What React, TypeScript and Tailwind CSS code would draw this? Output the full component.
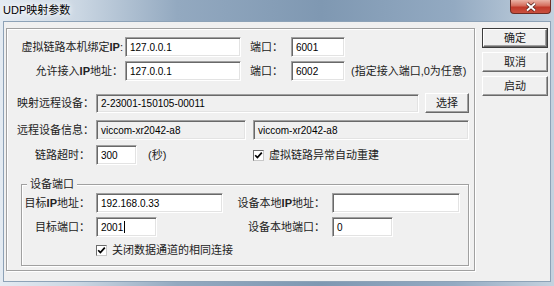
import React from 'react';

const font = "font-['Liberation_Sans','Noto_Sans_CJK_SC',sans-serif]";
const sunken =
  'border border-t-[#a0a0a0] border-l-[#a0a0a0] border-r-white border-b-white shadow-[inset_1px_1px_0_#696969,inset_-1px_-1px_0_#e3e3e3]';
const etched = 'border border-[#a0a0a0] shadow-[inset_1px_1px_0_#fff,1px_1px_0_#fff]';

type FieldProps = { className?: string; value?: string; readOnly?: boolean; caret?: boolean };

const Field: React.FC<FieldProps> = ({ className = '', value = '', readOnly, caret }) => (
  <div
    className={`${sunken} flex h-[20px] shrink-0 items-center pl-[4px] text-[10px] text-black ${
      readOnly ? 'bg-[#f0f0f0]' : 'bg-white'
    } ${className}`}
  >
    {value}
    {caret && <span className="ml-px h-[12px] w-px bg-black" />}
  </div>
);

const Label: React.FC<{ className?: string; children: React.ReactNode }> = ({ className = '', children }) => (
  <div className={`shrink-0 whitespace-nowrap text-[11px] leading-[14px] text-[#222] ${className}`}>{children}</div>
);

const Btn: React.FC<{ className?: string; def?: boolean; children: React.ReactNode }> = ({
  className = '',
  def,
  children,
}) => (
  <div className={`h-[20px] ${def ? 'border border-[#3c3c3c]' : ''} ${className}`}>
    <div className="flex h-full items-center justify-center border border-t-white border-l-white border-r-[#696969] border-b-[#696969] bg-[#f0f0f0] text-[11px] text-[#222] shadow-[inset_-1px_-1px_0_#a0a0a0]">
      {children}
    </div>
  </div>
);

const Check: React.FC<{ children: React.ReactNode }> = ({ children }) => (
  <div className="flex items-center gap-[5px]">
    <span className="flex h-[11px] w-[11px] items-center justify-center border border-t-[#6b6b6b] border-l-[#6b6b6b] border-r-[#c8c8c8] border-b-[#c8c8c8] bg-white">
      <svg width="9" height="9" viewBox="0 0 9 9">
        <path d="M1.2 4.2 L3.4 6.6 L7.8 1.6" fill="none" stroke="#000" strokeWidth="1.7" />
      </svg>
    </span>
    <Label>{children}</Label>
  </div>
);

const App: React.FC = () => {
  return (
    <div
      className={`${font} flex h-[286px] w-[554px] flex-col bg-[linear-gradient(90deg,#e4ebf2_0%,#cbd7e3_14%,#93a9c0_32%,#7f98b2_58%,#93aac2_82%,#c4d2df_100%)]`}
    >
      {/* title bar */}
      <div className="flex h-[21px] items-start justify-between">
        <div className="pl-[3px] pt-[3px] text-[11px] leading-[14px] text-black [text-shadow:0_0_5px_#fff,0_0_8px_#fff]">
          UDP映射参数
        </div>
        <div className="mr-[3px] flex h-[14px] w-[41px] items-center justify-center rounded-b-[4px] border border-t-0 border-[#6e2c24] bg-[linear-gradient(180deg,#eab3a6_0%,#d46d5c_45%,#c0392a_55%,#c9503e_100%)]">
          <svg width="12" height="10" viewBox="0 0 12 10">
            <path d="M2 1.5 L10 8.5 M10 1.5 L2 8.5" stroke="#4a1a14" strokeWidth="3.4" />
            <path d="M2 1.5 L10 8.5 M10 1.5 L2 8.5" stroke="#fff" strokeWidth="2" />
          </svg>
        </div>
      </div>

      {/* client area */}
      <div className="mx-[3px] flex h-[261px] border border-[#8da2b7] bg-[#f0f0f0]">
        <div className={`${etched} ml-[2px] mt-[6px] flex h-[243px] w-[469px] flex-col pt-[8px]`}>
          <div className="flex h-[20px] items-center">
            <Label className="w-[116px] text-right">
              虚拟链路本机绑定<b>IP</b>:
            </Label>
            <Field className="ml-[2px] w-[116px]" value="127.0.0.1" />
            <Label className="w-[50px] pl-[9px]">端口：</Label>
            <Field className="w-[54px]" value="6001" />
          </div>
          <div className="mt-[4px] flex h-[20px] items-center">
            <Label className="w-[116px] text-right">
              允许接入<b>IP</b>地址：
            </Label>
            <Field className="ml-[2px] w-[116px]" value="127.0.0.1" />
            <Label className="w-[50px] pl-[9px]">端口：</Label>
            <Field className="w-[54px]" value="6002" />
            <Label className="ml-[6px]">(指定接入端口,0为任意)</Label>
          </div>
          <div className="mt-[12px] flex h-[20px] items-center">
            <Label className="w-[89px] pl-[10px]">映射远程设备：</Label>
            <Field className="!h-[19px] w-[323px]" value="2-23001-150105-00011" readOnly />
            <Btn className="ml-[6px] w-[44px]">选择</Btn>
          </div>
          <div className="mt-[7px] flex h-[20px] items-center">
            <Label className="w-[89px] pl-[10px]">远程设备信息：</Label>
            <Field className="w-[150px]" value="viccom-xr2042-a8" readOnly />
            <Field className="ml-[7px] w-[216px]" value="viccom-xr2042-a8" readOnly />
          </div>
          <div className="mt-[5px] flex h-[20px] items-center">
            <div className="flex w-[246px] items-center">
              <Label className="w-[89px] pr-[6px] text-right">链路超时：</Label>
              <Field className="w-[41px]" value="300" />
              <Label className="ml-[11px]">(秒)</Label>
            </div>
            <Check>虚拟链路异常自动重建</Check>
          </div>

          <fieldset className={`${etched} ml-[14px] mt-[12px] w-[448px] pb-[7px] pt-[2px]`}>
            <legend className="ml-[5px] bg-[#f0f0f0] px-[3px] text-[11px] leading-[14px] text-[#222]">设备端口</legend>
            <div className="flex h-[20px] items-center">
              <Label className="w-[74px] pr-[6px] text-right">
                目标<b>IP</b>地址：
              </Label>
              <Field className="w-[127px]" value="192.168.0.33" />
              <Label className="w-[109px] pr-[7px] text-right">
                设备本地<b>IP</b>地址：
              </Label>
              <Field className="w-[128px]" />
            </div>
            <div className="mt-[4px] flex h-[20px] items-center">
              <Label className="w-[74px] pr-[6px] text-right">目标端口：</Label>
              <Field className="w-[61px]" value="2001" caret />
              <Label className="w-[175px] pr-[7px] text-right">设备本地端口：</Label>
              <Field className="w-[61px]" value="0" />
            </div>
            <div className="mt-[5px] flex h-[16px] items-center pl-[74px]">
              <Check>关闭数据通道的相同连接</Check>
            </div>
          </fieldset>
        </div>

        <div className="ml-[7px] mt-[6px] flex w-[66px] flex-col gap-[4px]">
          <Btn def>确定</Btn>
          <Btn>取消</Btn>
          <Btn>启动</Btn>
        </div>
      </div>
    </div>
  );
};

export default App;
